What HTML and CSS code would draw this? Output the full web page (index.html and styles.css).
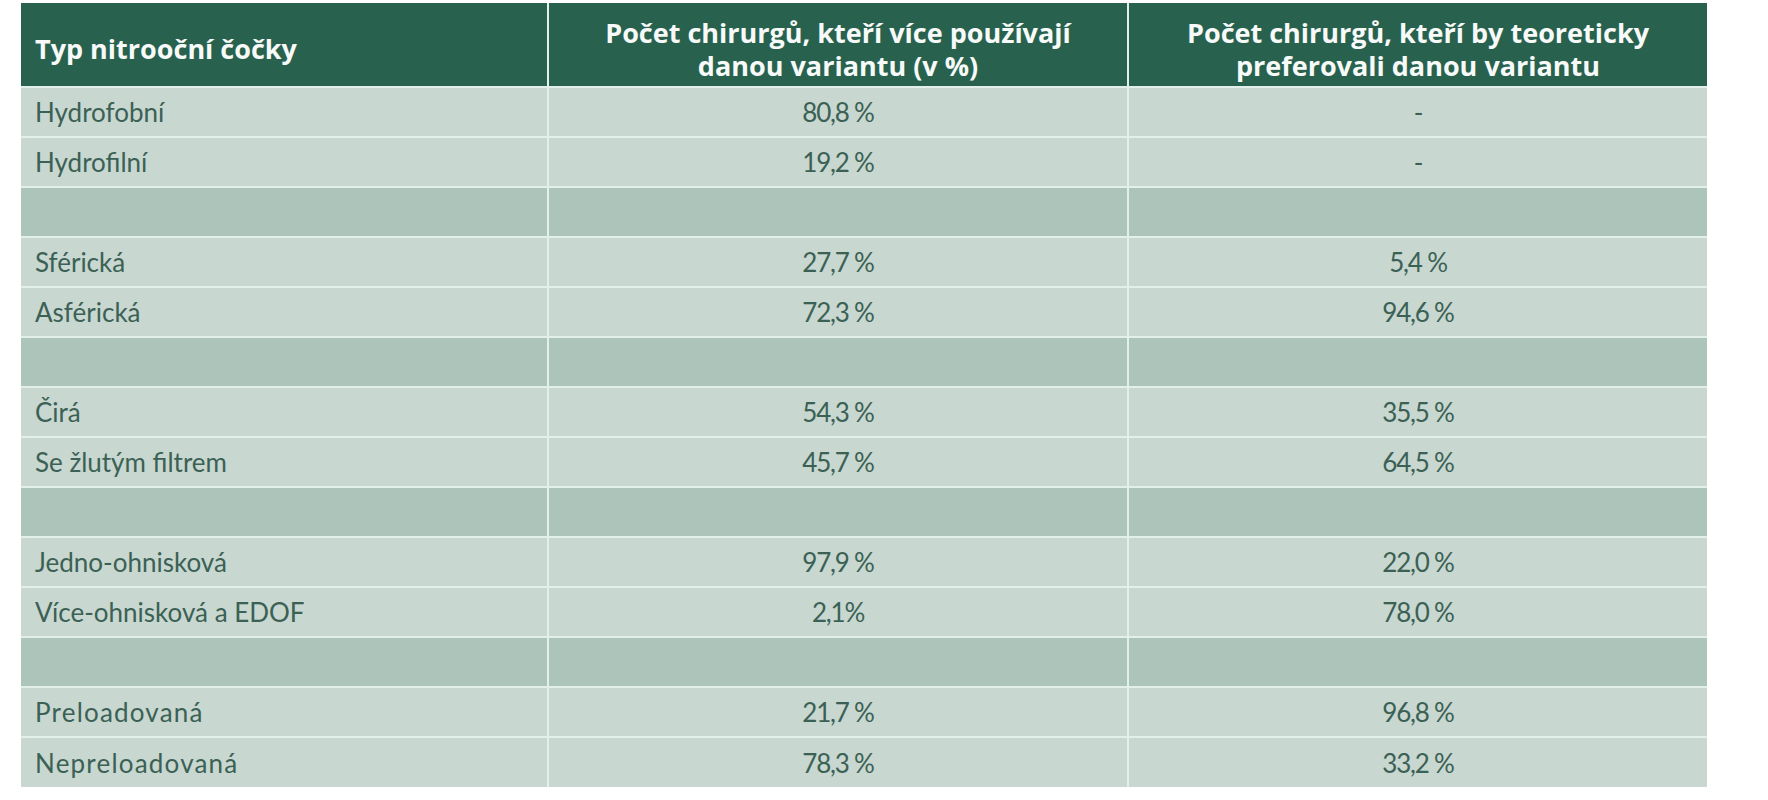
FILE: index.html
```html
<!DOCTYPE html>
<html lang="cs">
<head>
<meta charset="utf-8">
<title>Typ nitrooční čočky</title>
<link rel="stylesheet" href="styles.css">
</head>
<body>
<table class="tbl">
  <colgroup>
    <col class="c1">
    <col class="c2">
    <col class="c3">
  </colgroup>
  <thead>
    <tr class="head">
      <th class="first">Typ nitrooční čočky</th>
      <th>Počet chirurgů, kteří více používají<br>danou variantu (v %)</th>
      <th>Počet chirurgů, kteří by teoreticky<br>preferovali danou variantu</th>
    </tr>
  </thead>
  <tbody>
    <tr><td class="first">Hydrofobní</td><td class="num">80,8 %</td><td class="num">-</td></tr>
    <tr><td class="first">Hydrofilní</td><td class="num">19,2 %</td><td class="num">-</td></tr>
    <tr class="sep"><td class="first"></td><td></td><td></td></tr>
    <tr><td class="first">Sférická</td><td class="num">27,7 %</td><td class="num">5,4 %</td></tr>
    <tr><td class="first">Asférická</td><td class="num">72,3 %</td><td class="num">94,6 %</td></tr>
    <tr class="sep"><td class="first"></td><td></td><td></td></tr>
    <tr><td class="first">Čirá</td><td class="num">54,3 %</td><td class="num">35,5 %</td></tr>
    <tr><td class="first">Se žlutým filtrem</td><td class="num">45,7 %</td><td class="num">64,5 %</td></tr>
    <tr class="sep"><td class="first"></td><td></td><td></td></tr>
    <tr><td class="first">Jedno-ohnisková</td><td class="num">97,9 %</td><td class="num">22,0 %</td></tr>
    <tr><td class="first">Více-ohnisková a EDOF</td><td class="num">2,1%</td><td class="num">78,0 %</td></tr>
    <tr class="sep"><td class="first"></td><td></td><td></td></tr>
    <tr><td class="first wide">Preloadovaná</td><td class="num">21,7 %</td><td class="num">96,8 %</td></tr>
    <tr class="last"><td class="first wide">Nepreloadovaná</td><td class="num">78,3 %</td><td class="num">33,2 %</td></tr>
  </tbody>
</table>
</body>
</html>
```
FILE: styles.css
```css
html, body {
  margin: 0;
  padding: 0;
  background: #ffffff;
}

body {
  padding: 3px 0 0 21px;
  font-family: Lato, "Open Sans", "Liberation Sans", sans-serif;
}

.tbl {
  border-collapse: separate;
  border-spacing: 0;
  table-layout: fixed;
  width: 1686px;
}

.c1 { width: 528px; }
.c2 { width: 580px; }
.c3 { width: 578px; }

.tbl th,
.tbl td {
  box-sizing: border-box;
  padding: 0;
  border-right: 2px solid #e3efe9;
  border-bottom: 2px solid #e3efe9;
  text-align: center;
  vertical-align: middle;
}

.tbl th:last-child,
.tbl td:last-child {
  border-right: 0;
}

.head th {
  height: 85px;
  background: #28624f;
  color: #f7faf8;
  font-family: "Open Sans", Lato, "Liberation Sans", sans-serif;
  font-weight: 700;
  font-size: 27px;
  line-height: 33px;
  padding-top: 8px;
}

.tbl th.first,
.tbl td.first {
  text-align: left;
  padding-left: 14px;
}

.tbl td {
  height: 50px;
  background: #c8d7d0;
  color: #3b6155;
  font-size: 26px;
  font-weight: 400;
  line-height: 30px;
}

.tbl td.num {
  letter-spacing: -1.2px;
}

.tbl td.wide {
  letter-spacing: 1.2px;
}

.tbl tr.sep td {
  background: #adc4ba;
}

.tbl tr.last td {
  border-bottom: 0;
  height: 49px;
}
```
